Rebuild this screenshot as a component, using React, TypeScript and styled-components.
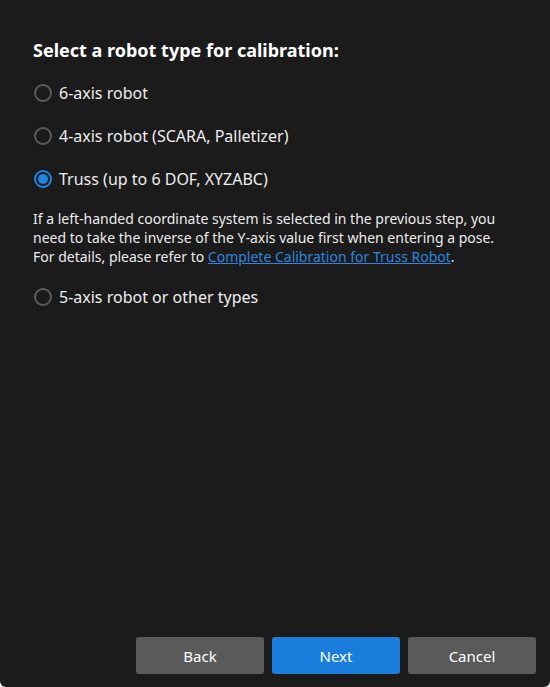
import React, { useState } from 'react';
import styled, { createGlobalStyle } from 'styled-components';

const GlobalStyle = createGlobalStyle`
  html, body {
    margin: 0;
    padding: 0;
    background: #f0f0f0;
  }
  #root {
    height: 687px;
  }
`;

const Dialog = styled.div`
  box-sizing: border-box;
  width: 550px;
  height: 687px;
  display: flex;
  flex-direction: column;
  background: #1b1b1b;
  border-radius: 0 0 6px 6px;
  color: #f0f0f0;
  font-family: 'Noto Sans', 'Liberation Sans', sans-serif;
`;

const Body = styled.div`
  flex: 1;
  padding: 38px 33px 0 33px;
`;

const Title = styled.h2`
  margin: 0 0 20px 0;
  font-size: 18px;
  line-height: 24px;
  font-weight: 700;
  color: #ffffff;
`;

const Options = styled.div`
  display: flex;
  flex-direction: column;
`;

const Option = styled.label`
  display: flex;
  align-items: center;
  gap: 7px;
  height: 22px;
  margin-bottom: 21px;
  font-size: 16px;
  color: #ededed;
  cursor: pointer;
`;

const Ring = styled.span<{ $checked: boolean }>`
  box-sizing: border-box;
  flex: none;
  width: 18px;
  height: 18px;
  margin-left: 1px;
  border-radius: 50%;
  border: 2px solid ${(p) => (p.$checked ? '#1e85e3' : '#5c5c5c')};
  display: flex;
  align-items: center;
  justify-content: center;

  &::after {
    content: '';
    width: 10px;
    height: 10px;
    border-radius: 50%;
    background: ${(p) => (p.$checked ? '#1e85e3' : 'transparent')};
  }
`;

const Note = styled.p`
  margin: -2px 0 20px 0;
  font-size: 14px;
  line-height: 19px;
  color: #ececec;

  a {
    color: #2e86de;
    text-decoration: underline;
  }
`;

const Footer = styled.div`
  display: flex;
  justify-content: flex-end;
  gap: 8px;
  padding: 0 14px 13px 0;
`;

const Button = styled.button<{ $primary?: boolean }>`
  width: 128px;
  height: 37px;
  border: none;
  border-radius: 3px;
  background: ${(p) => (p.$primary ? '#1a7ddb' : '#5a5a5a')};
  color: #ffffff;
  font-family: inherit;
  font-size: 15px;
  cursor: pointer;
`;

const types = [
  '6-axis robot',
  '4-axis robot (SCARA, Palletizer)',
  'Truss (up to 6 DOF, XYZABC)',
  '5-axis robot or other types',
];

const App = () => {
  const [selected, setSelected] = useState(2);

  return (
    <>
      <GlobalStyle />
      <Dialog>
        <Body>
          <Title>Select a robot type for calibration:</Title>
          <Options>
            {types.map((label, i) => (
              <React.Fragment key={label}>
                <Option onClick={() => setSelected(i)}>
                  <Ring $checked={selected === i} />
                  {label}
                </Option>
                {i === 2 && selected === 2 && (
                  <Note>
                    If a left-handed coordinate system is selected in the previous step, you
                    need to take the inverse of the Y-axis value first when entering a pose.
                    For details, please refer to{' '}
                    <a href="#">Complete Calibration for Truss Robot</a>.
                  </Note>
                )}
              </React.Fragment>
            ))}
          </Options>
        </Body>
        <Footer>
          <Button>Back</Button>
          <Button $primary>Next</Button>
          <Button>Cancel</Button>
        </Footer>
      </Dialog>
    </>
  );
};

export default App;
